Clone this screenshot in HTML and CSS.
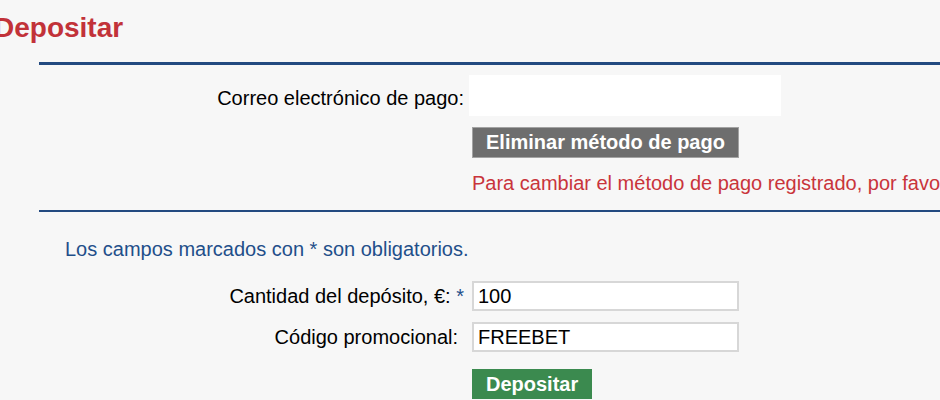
FILE: index.html
```html
<!DOCTYPE html>
<html lang="es">
<head>
  <meta charset="UTF-8" />
  <meta name="viewport" content="width=device-width, initial-scale=1.0">
  <title>Depositar</title>
  <link rel="stylesheet" href="styles.css">
</head>
<body class="deposit-page">

  <h1 class="page-title">Depositar</h1>

  <!-- Registered payment method -->
  <div class="form-section payment-section">
    <div class="form-grid">
      <span class="field-label email-label">Correo electrónico de pago:</span>
      <div class="field-value"><div class="email-box"></div></div>

      <span class="field-label"></span>
      <div class="field-value"><button class="btn btn-grey">Eliminar método de pago</button></div>

      <span class="field-label"></span>
      <div class="field-value notice-text">Para cambiar el método de pago registrado, por favor, póngase en contacto con el servicio de atención al cliente.</div>
    </div>
  </div>

  <!-- Deposit form -->
  <div class="form-section deposit-section">
    <p class="required-note">Los campos marcados con * son obligatorios.</p>
    <form class="form-grid" onsubmit="return false;">
      <label class="field-label" for="amount">Cantidad del depósito, €: <span class="req">*</span></label>
      <div class="field-value"><input type="text" id="amount" value="100" /></div>

      <label class="field-label promo-label" for="promo">Código promocional:</label>
      <div class="field-value"><input type="text" id="promo" value="FREEBET" /></div>

      <span class="field-label"></span>
      <div class="field-value submit-cell"><button class="btn btn-green" type="submit">Depositar</button></div>
    </form>
  </div>

</body>
</html>
```

FILE: styles.css
```css
html, body {
  margin: 0;
  padding: 0;
  overflow: hidden;
}

body.deposit-page {
  background-color: #f7f7f7;
  font-family: 'Liberation Sans', Arial, sans-serif;
  font-size: 20px;
  line-height: 23px;
  color: #000000;
}

.page-title {
  margin: 0 0 0 -6px;
  padding-top: 12px;
  font-size: 28px;
  line-height: 32px;
  font-weight: bold;
  color: #c23239;
}

.form-section {
  margin-left: 39px;
  border-top: 3px solid #234a80;
}

.payment-section {
  margin-top: 18px;
  padding-top: 10px;
  padding-bottom: 15px;
}

.deposit-section {
  border-top-width: 2px;
  padding-top: 26px;
}

.form-grid {
  display: grid;
  grid-template-columns: 425px 1fr;
  column-gap: 8px;
  row-gap: 11px;
  align-items: center;
}

.field-label {
  text-align: right;
  white-space: nowrap;
}

.email-label {
  padding-top: 5px;
}

.promo-label {
  padding-right: 6px;
}

.req {
  color: #1f4f8a;
}

.email-box {
  width: 312px;
  height: 41px;
  margin-left: -3px;
  background-color: #ffffff;
}

.btn {
  font-family: 'Liberation Sans', Arial, sans-serif;
  font-size: 20px;
  font-weight: bold;
  color: #ffffff;
  height: 30px;
  padding: 0 14px;
  border: none;
  border-radius: 0;
  cursor: pointer;
}

.btn-grey {
  height: 31px;
  background-color: #6e6e6e;
  border: 1px solid #a3a3a3;
  padding: 0 13px;
}

.btn-green {
  background-color: #3b8a4f;
}

.notice-text {
  margin-top: 3px;
  color: #c9343b;
  white-space: nowrap;
}

.required-note {
  margin: 0 0 20px 26px;
  color: #1f4f8a;
}

.field-value input {
  box-sizing: border-box;
  width: 267px;
  height: 30px;
  margin: 0;
  padding: 0 4px;
  border: 2px solid #d7d7d7;
  background-color: #ffffff;
  font-family: 'Liberation Sans', Arial, sans-serif;
  font-size: 20px;
  color: #000000;
}

.submit-cell {
  margin-top: 6px;
}
```
